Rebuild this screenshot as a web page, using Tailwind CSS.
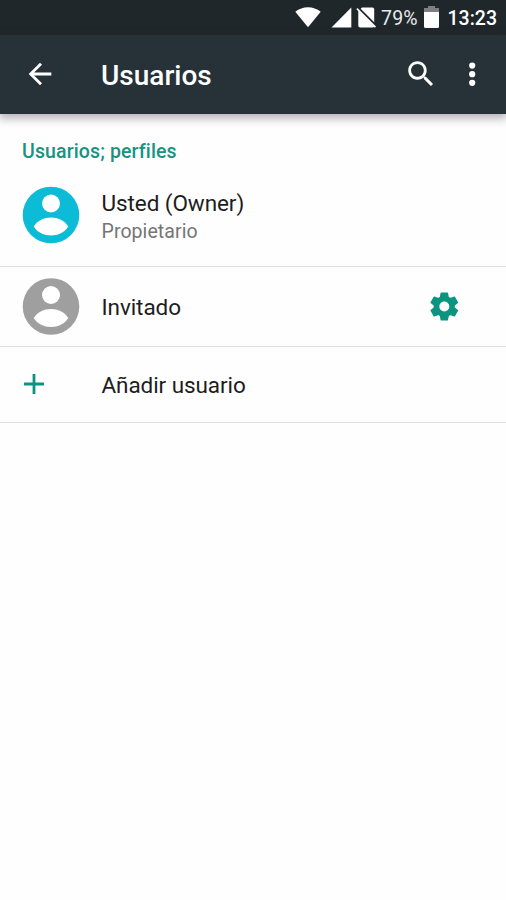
<!DOCTYPE html>
<html lang="es">
<head>
<meta charset="utf-8">
<title>Usuarios</title>
<script src="https://cdn.jsdelivr.net/npm/@tailwindcss/browser@4"></script>
</head>
<body class="bg-white">
<div class="flex h-[900px] w-[506px] flex-col overflow-hidden bg-[#fefefe] font-[Roboto,sans-serif] text-[#1d1d1d]">
  <div class="flex h-[35px] shrink-0 items-center bg-[#20272b] pl-[295px] text-white">
    <svg class="h-[35px] w-[82px] shrink-0" viewBox="0 0 82 35" fill="#fff">
      <path d="M.3 11.700C7.500 5.600 18.500 5.600 25.700 11.700L13 27.300Z"/>
      <path d="M56.300 7.500V27.500H36.500Z"/>
      <path d="M67 7.500H77.500Q79.200 7.500 79.200 9.200V22.300L65.700 8.800Z"/>
      <path d="M61.300 9.300 62.500 8.100 81 26.600 79.800 27.800 79.100 27.100Q78.600 27.500 77.500 27.500H65.200Q63.300 27.500 63.300 25.700V11.300Z"/>
    </svg>
    <span class="ml-[4px] w-[43px] shrink-0 pt-[2px] text-[19.500px] leading-[35px] tracking-[0.2px] whitespace-nowrap text-[#e8eaea]">79%</span>
    <svg class="h-[35px] w-[15px] shrink-0" viewBox="0 0 15 35">
      <path d="M4 6H11V8H15V12H0V8H4Z" fill="#7c8082"/>
      <path d="M0 12H15V26.500Q15 28 13.500 28H1.500Q0 28 0 26.500Z" fill="#fff"/>
    </svg>
    <span class="ml-[8.500px] pt-[2px] text-[19.500px] leading-[35px] font-medium whitespace-nowrap">13:23</span>
  </div>
  <header class="z-10 flex h-[79px] shrink-0 items-center bg-[#263238] pl-[22.500px] text-white shadow-[0_3px_9px_1px_rgba(60,45,60,0.4)]">
    <svg class="-mt-[1px] h-[34px] w-[34px] shrink-0" viewBox="0 0 24 24" fill="#fff"><path d="M20 11H7.830l5.590-5.590L12 4l-8 8 8 8 1.410-1.410L7.830 13H20v-2z"/></svg>
    <h1 class="ml-[44.500px] w-[303px] shrink-0 pt-[2px] text-[28px] font-medium">Usuarios</h1>
    <svg class="-mt-[1px] h-[34px] w-[34px] shrink-0" viewBox="0 0 24 24" fill="#fff"><path d="M15.500 14h-.79l-.28-.27C15.410 12.590 16 11.110 16 9.500 16 5.910 13.090 3 9.500 3S3 5.910 3 9.500 5.910 16 9.500 16c1.610 0 3.090-.59 4.230-1.570l.27.28v.79l5 4.990L20.490 19l-4.990-5zm-6 0C7.010 14 5 11.990 5 9.500S7.010 5 9.500 5 14 7.010 14 9.500 11.990 14 9.500 14z"/></svg>
    <svg class="-mt-[1px] ml-[17px] h-[34px] w-[34px] shrink-0" viewBox="0 0 34 34" fill="#fff"><circle cx="17.200" cy="8.600" r="3.100"/><circle cx="17.200" cy="17.200" r="3.100"/><circle cx="17.200" cy="25.800" r="3.100"/></svg>
  </header>
  <main>
    <h2 class="flex h-[51px] items-end pl-[22px] text-[19.500px] leading-[26px] font-medium tracking-[0.13px] text-[#17937f]"><span>Usuarios; perfiles</span></h2>
    <div class="flex h-[102px] items-center border-b border-[#dedede] pl-[22px]">
      <svg class="-mt-[1px] h-[58px] w-[58px] shrink-0" viewBox="0 0 58 58"><circle cx="29" cy="29" r="28.300" fill="#0cbcd6"/><circle cx="29" cy="17.500" r="9" fill="#fff"/><path d="M11.700 40.500C19 28.500 39 28.500 46.300 40.500C39 52.500 19 52.500 11.700 40.500Z" fill="#fff"/></svg>
      <div class="ml-[21.500px] pt-[2px]">
        <div class="text-[22.500px] leading-[29px] tracking-[-0.08px]">Usted (Owner)</div>
        <div class="text-[19.500px] leading-[27px] tracking-[0.08px] text-[#757575]">Propietario</div>
      </div>
    </div>
    <div class="flex h-[80px] items-center border-b border-[#dedede] pl-[22px]">
      <svg class="h-[58px] w-[58px] shrink-0" viewBox="0 0 58 58"><circle cx="29" cy="28.500" r="28.300" fill="#9f9f9f"/><circle cx="29" cy="17" r="9" fill="#fff"/><path d="M11.700 40C19 28 39 28 46.300 40C39 52 19 52 11.700 40Z" fill="#fff"/></svg>
      <div class="ml-[21.500px] w-[325.500px] pt-[2px] text-[22.500px] tracking-[-0.08px]">Invitado</div>
      <svg class="h-[34px] w-[34px] shrink-0" viewBox="-17.300 -16.500 34 34" fill="#0b9480">
        <path fill-rule="evenodd" d="M0-10.600A10.600 10.600 0 1 1 0 10.600A10.600 10.600 0 1 1 0-10.600ZM0-5A5 5 0 1 0 0 5A5 5 0 1 0 0-5Z"/>
        <path id="tooth" d="M-4.600-9-3.700-13.600Q-3.600-14.100-3.100-14.100H3.100Q3.600-14.100 3.700-13.600L4.600-9Z"/>
        <use href="#tooth" transform="rotate(60)"/><use href="#tooth" transform="rotate(120)"/><use href="#tooth" transform="rotate(180)"/><use href="#tooth" transform="rotate(240)"/><use href="#tooth" transform="rotate(300)"/>
      </svg>
    </div>
    <div class="flex h-[76px] items-center border-b border-[#dedede] pl-[24px]">
      <svg class="-mt-[1px] h-[20px] w-[20px] shrink-0" viewBox="0 0 20 20"><path d="M10 0V20M0 10H20" stroke="#0b9480" stroke-width="2.800"/></svg>
      <div class="ml-[57.500px] pt-[2px] text-[22.500px] tracking-[-0.08px]">Añadir usuario</div>
    </div>
  </main>
</div>
</body>
</html>
